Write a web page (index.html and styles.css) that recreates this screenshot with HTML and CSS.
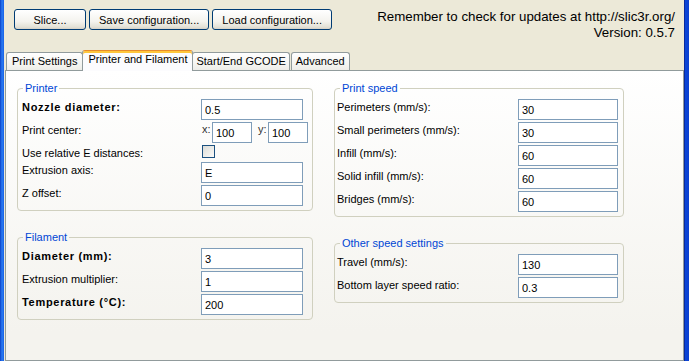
FILE: index.html
```html
<!DOCTYPE html>
<html lang="en">
  <head>
    <meta charset="UTF-8" />
    <meta name="viewport" content="width=device-width, initial-scale=1.0" />
    <title>Slic3r</title>
    <link rel="stylesheet" href="styles.css">
  </head>
  <body>
    <div class="frame-left"></div>

    <div class="window">
      <div class="header">
        <div class="actions">
          <button class="btn">Slice...</button>
          <button class="btn">Save configuration...</button>
          <button class="btn">Load configuration...</button>
        </div>
        <div class="status">
          <p>Remember to check for updates at http://slic3r.org/</p>
          <p>Version: 0.5.7</p>
        </div>
      </div>

      <div class="tabs">
        <div class="tab">Print Settings</div>
        <div class="tab active">Printer and Filament</div>
        <div class="tab">Start/End GCODE</div>
        <div class="tab">Advanced</div>
      </div>

      <div class="panel">
        <div class="column column-left">
          <fieldset class="group">
            <legend>Printer</legend>
            <div class="rows">
              <label class="bold">Nozzle diameter:</label>
              <input class="field" type="text" value="0.5" />

              <label>Print center:</label>
              <div class="point">
                <span>x:</span>
                <input class="field small" type="text" value="100" />
                <span class="second">y:</span>
                <input class="field small" type="text" value="100" />
              </div>

              <label>Use relative E distances:</label>
              <span class="checkbox"></span>

              <label>Extrusion axis:</label>
              <input class="field" type="text" value="E" />

              <label>Z offset:</label>
              <input class="field" type="text" value="0" />
            </div>
          </fieldset>

          <fieldset class="group">
            <legend>Filament</legend>
            <div class="rows">
              <label class="bold">Diameter (mm):</label>
              <input class="field" type="text" value="3" />

              <label>Extrusion multiplier:</label>
              <input class="field" type="text" value="1" />

              <label class="bold">Temperature (°C):</label>
              <input class="field" type="text" value="200" />
            </div>
          </fieldset>
        </div>

        <div class="column column-right">
          <fieldset class="group">
            <legend>Print speed</legend>
            <div class="rows">
              <label>Perimeters (mm/s):</label>
              <input class="field" type="text" value="30" />

              <label>Small perimeters (mm/s):</label>
              <input class="field" type="text" value="30" />

              <label>Infill (mm/s):</label>
              <input class="field" type="text" value="60" />

              <label>Solid infill (mm/s):</label>
              <input class="field" type="text" value="60" />

              <label>Bridges (mm/s):</label>
              <input class="field" type="text" value="60" />
            </div>
          </fieldset>

          <fieldset class="group">
            <legend>Other speed settings</legend>
            <div class="rows">
              <label>Travel (mm/s):</label>
              <input class="field" type="text" value="130" />

              <label>Bottom layer speed ratio:</label>
              <input class="field" type="text" value="0.3" />
            </div>
          </fieldset>
        </div>
      </div>
    </div>

    <div class="frame-right"></div>
  </body>
</html>
```

FILE: styles.css
```css
* {
  margin: 0;
  padding: 0;
  box-sizing: border-box;
}

body {
  width: 689px;
  height: 361px;
  overflow: hidden;
  display: flex;
  background: #ece9d8;
  font-family: "Liberation Sans", Arial, sans-serif;
  font-size: 11px;
  color: #000;
}

.frame-left {
  width: 4px;
  background: linear-gradient(to right, #0a3fc7, #2a7bf2 50%, #1861e6);
}

.frame-right {
  width: 5px;
  border-left: 1px solid #0a2a9c;
  background: linear-gradient(to right, #0a46d8, #0b3fd0);
}

.window {
  flex: 1;
  display: flex;
  flex-direction: column;
  padding: 0 0 0 1px;
}

/* top bar */

.header {
  display: flex;
  justify-content: space-between;
  align-items: flex-start;
  padding: 9px 9px 0 9px;
}

.actions {
  display: flex;
  gap: 3px;
}

.btn {
  min-width: 72px;
  height: 21px;
  padding: 0 9px;
  font-family: inherit;
  font-size: 11px;
  color: #000;
  border: 1px solid #003c74;
  border-radius: 3px;
  background: linear-gradient(#ffffff, #f4f3ee 60%, #e3e1d6 90%, #d6d0c5);
}

.status {
  text-align: right;
  font-size: 13.3px;
  line-height: 16px;
}

/* tabs */

.tabs {
  display: flex;
  align-items: flex-end;
  height: 21px;
  margin: 9px 0 -1px 1px;
}

.tab {
  height: 19px;
  padding: 0 4px;
  line-height: 17px;
  border: 1px solid #919b9c;
  border-bottom: none;
  border-radius: 3px 3px 0 0;
  background: linear-gradient(#ffffff, #f3f3ef 70%, #ecebe6);
}

.tab:first-child {
  padding: 0 5px;
}

.tab.active {
  position: relative;
  z-index: 1;
  height: 21px;
  margin: 0 0 0 -1px;
  padding: 0 5px;
  line-height: 17px;
  border-top: 1px solid #e68b2c;
  box-shadow: inset 0 2px #ffc73c;
  background: #fcfcfe;
}

.tab.active + .tab {
  margin-left: -1px;
  padding: 0 3px;
}

.tab + .tab + .tab + .tab {
  margin-left: 1px;
}

/* tab page */

.panel {
  flex: 1;
  display: flex;
  gap: 21px;
  padding: 11px 0 0 11px;
  border: 1px solid #919b9c;
  background: linear-gradient(#ffffff, #f4f3ee 90%);
}

.column {
  display: flex;
  flex-direction: column;
  gap: 20px;
}

.column-left {
  width: 296px;
}

.column-right {
  width: 290px;
}

.group {
  border: 1px solid #d0d0bf;
  border-radius: 4px;
  padding: 4px 3px 4px 4px;
}

.group legend {
  margin-left: 1px;
  padding: 0 2px;
  line-height: 13px;
  color: #0046d5;
}

.column-right .group {
  padding-left: 2px;
}

.column-right .group legend {
  margin-left: 3px;
}

.rows {
  display: grid;
  grid-template-columns: 179px auto;
  align-items: start;
  row-gap: 2px;
}

.column-right .rows {
  grid-template-columns: 181px auto;
}

.rows label {
  padding-top: 2px;
  line-height: 13px;
}

.rows label.bold {
  font-weight: bold;
  letter-spacing: 0.7px;
}

.field {
  width: 102px;
  height: 21px;
  padding: 1px 3px 0;
  font-family: inherit;
  font-size: 11px;
  color: #000;
  border: 1px solid #7f9db9;
  background: #fff;
  outline: none;
}

.column-right .field {
  width: 100px;
}

.point {
  display: flex;
  align-items: flex-start;
}

.point span {
  width: 11px;
  padding: 1px 0 0 1px;
  line-height: 13px;
  color: #333;
}

.point span.second {
  width: 10px;
  margin-left: 6px;
  padding-left: 0;
}

.point .field.small {
  width: 40px;
}

.checkbox {
  display: block;
  width: 13px;
  height: 13px;
  margin-left: 1px;
  border: 1px solid #1c5180;
  background: linear-gradient(135deg, #dcdcd7, #fbfbf9);
}
```
